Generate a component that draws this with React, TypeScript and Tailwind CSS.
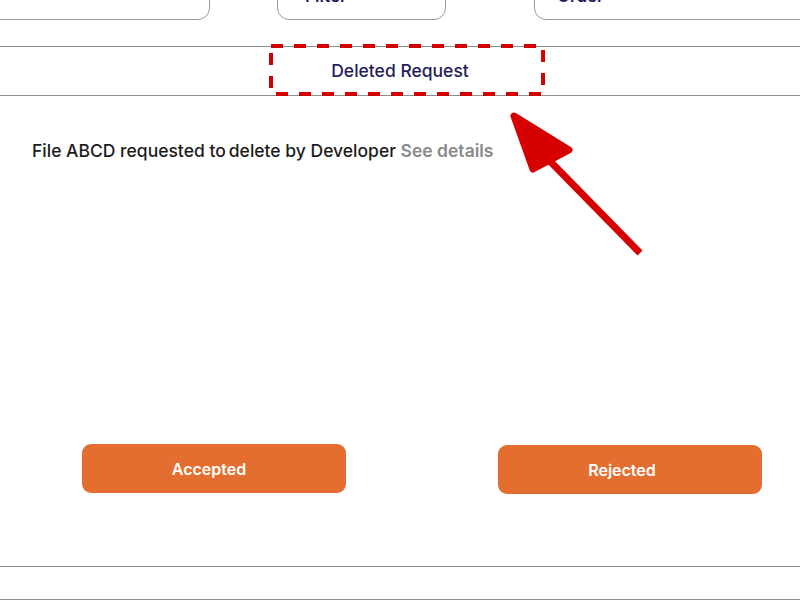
import React from "react";

const font = { fontFamily: "Inter, 'Noto Sans', sans-serif" };

export default function App() {
  return (
    <div className="relative w-[800px] h-[600px] overflow-hidden bg-white" style={font}>
      {/* top tabs, cut off by the viewport */}
      <div className="flex -mt-[30px] h-[50px]">
        <div className="shrink-0 ml-[-40px] w-[250px] h-[50px] border border-[#9a9a9a] rounded-[12px] flex items-end pb-[11px]">
          <span className="ml-[-20px] text-[17px] leading-[24px] font-semibold text-[#1f1d5c]">Search</span>
        </div>
        <div className="shrink-0 ml-[67px] w-[169px] h-[50px] border border-[#9a9a9a] rounded-[12px] flex items-end pb-[11px] pl-[27px]">
          <span className="text-[17px] leading-[24px] font-semibold text-[#1f1d5c]">Filter</span>
        </div>
        <div className="shrink-0 ml-[88px] w-[300px] h-[50px] border border-[#9a9a9a] rounded-[12px] flex items-end pb-[11px] pl-[22px]">
          <span className="text-[17px] leading-[24px] font-semibold text-[#1f1d5c]">Order</span>
        </div>
      </div>

      {/* section heading */}
      <div className="mt-[26px] h-[50px] border-t border-b border-[#8c8c8c] flex items-center justify-center">
        <span className="text-[17.5px] font-medium text-[#1f1d5c]">Deleted Request</span>
      </div>

      <div className="mt-[43px] pl-[32px] text-[17.5px] font-medium text-[#1c1c1c] leading-[24px]">
        File ABCD requested to<span className="ml-[3px]">delete by Developer</span>{" "}
        <span className="font-semibold text-[#8a8a8a]">See details</span>
      </div>

      <div className="mt-[281px] flex pl-[82px] gap-[152px]">
        <button className="w-[264px] h-[49px] pr-[10px] rounded-[9px] bg-[#e46e2f] text-white text-[16px] font-semibold">
          Accepted
        </button>
        <button className="mt-px w-[264px] h-[49px] pr-[16px] rounded-[9px] bg-[#e46e2f] text-white text-[16px] font-semibold">
          Rejected
        </button>
      </div>

      <div className="mt-[72px] h-[34px] border-t border-b border-[#8c8c8c]" />

      {/* annotation overlay */}
      <svg className="absolute left-0 top-0 pointer-events-none" width="800" height="600">
        <rect x="271" y="46" width="272" height="48" fill="none" stroke="#d20000" strokeWidth="4" strokeDasharray="12 11" />
        <line x1="640" y1="253" x2="543" y2="154" stroke="#d70000" strokeWidth="7" />
        <polygon points="514,116 569,150 533,169" fill="#d70000" stroke="#d70000" strokeWidth="7" strokeLinejoin="round" />
      </svg>
    </div>
  );
}
